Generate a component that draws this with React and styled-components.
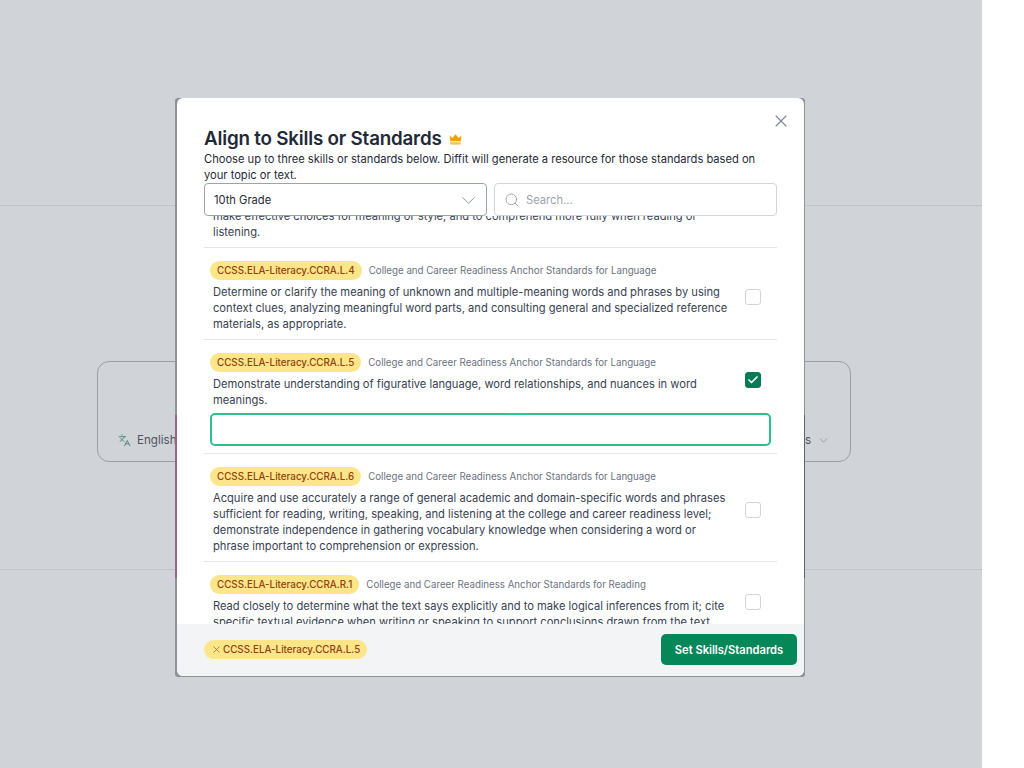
import React, { useLayoutEffect, useRef } from "react";
import styled, { createGlobalStyle } from "styled-components";
import { Languages, ChevronDown, Search, X, Check } from "lucide-react";

const GlobalStyle = createGlobalStyle`
  html, body { margin: 0; padding: 0; background: #fff; }
  body { font-family: Inter, "Liberation Sans", sans-serif; }
  * { box-sizing: border-box; }
`;

const standards = [
  {
    code: "CCSS.ELA-Literacy.CCRA.L.3",
    category: "College and Career Readiness Anchor Standards for Language",
    text: "Apply knowledge of language to understand how language functions in different contexts, to make effective choices for meaning or style, and to comprehend more fully when reading or listening.",
  },
  {
    code: "CCSS.ELA-Literacy.CCRA.L.4",
    category: "College and Career Readiness Anchor Standards for Language",
    text: "Determine or clarify the meaning of unknown and multiple-meaning words and phrases by using context clues, analyzing meaningful word parts, and consulting general and specialized reference materials, as appropriate.",
  },
  {
    code: "CCSS.ELA-Literacy.CCRA.L.5",
    category: "College and Career Readiness Anchor Standards for Language",
    text: "Demonstrate understanding of figurative language, word relationships, and nuances in word meanings.",
    checked: true,
  },
  {
    code: "CCSS.ELA-Literacy.CCRA.L.6",
    category: "College and Career Readiness Anchor Standards for Language",
    text: "Acquire and use accurately a range of general academic and domain-specific words and phrases sufficient for reading, writing, speaking, and listening at the college and career readiness level; demonstrate independence in gathering vocabulary knowledge when considering a word or phrase important to comprehension or expression.",
  },
  {
    code: "CCSS.ELA-Literacy.CCRA.R.1",
    category: "College and Career Readiness Anchor Standards for Reading",
    text: "Read closely to determine what the text says explicitly and to make logical inferences from it; cite specific textual evidence when writing or speaking to support conclusions drawn from the text.",
  },
];

const Page = styled.div`
  position: relative;
  width: 982px;
  height: 768px;
  overflow: hidden;
  background: #d0d3d8;
`;

const TopBand = styled.div`
  height: 206px;
  border-bottom: 1px solid #c0c3c9;
`;

const MiddleBand = styled.div`
  height: 364px;
  padding: 155px 0 0 97px;
  border-bottom: 1px solid #c0c3c9;
`;

const BackCard = styled.div`
  width: 754px;
  height: 101px;
  padding: 0 20px 11px;
  display: flex;
  align-items: flex-end;
  justify-content: space-between;
  border: 1px solid #9a9ea6;
  border-radius: 12px;
  font-size: 11.6px;
  line-height: 20px;
`;

const BackOption = styled.span`
  display: flex;
  align-items: center;
  gap: 6px;
  color: #4f545d;

  svg {
    color: ${(props) => props.$iconColor};
  }
`;

const Overlay = styled.div`
  position: absolute;
  inset: 0;
  display: flex;
  justify-content: center;
  padding: 98px 2px 0 0;
`;

const Plate = styled.div`
  width: 630px;
  height: 579px;
  padding: 0 1px 1px 2px;
  border-radius: 3px;
  background:
    linear-gradient(
        to bottom,
        #8e929b 0,
        #8e929b 317px,
        #96658f 317px,
        #96658f 480px,
        #8e929b 480px
      )
      left / 50% 100% no-repeat,
    linear-gradient(
        to bottom,
        #8e929b 0,
        #8e929b 317px,
        #5f6370 317px,
        #5f6370 480px,
        #8e929b 480px
      )
      right / 50% 100% no-repeat;
`;

const Modal = styled.section`
  position: relative;
  height: 578px;
  display: flex;
  flex-direction: column;
  overflow: hidden;
  border-radius: 6px;
  background: #fff;
  color: #1f2937;
`;

const CloseButton = styled.button`
  position: absolute;
  top: 13px;
  right: 13px;
  padding: 0;
  display: flex;
  border: 0;
  background: none;
  color: #7b8493;
`;

const Header = styled.header`
  padding: 29px 27px 0;
`;

const Title = styled.h2`
  margin: 0;
  display: flex;
  align-items: center;
  gap: 7px;
  font-size: 18.8px;
  line-height: 24px;
  font-weight: 600;
  letter-spacing: -0.2px;
  color: #1f2937;
`;

const Intro = styled.p`
  margin: 0;
  width: 565px;
  font-size: 11.15px;
  line-height: 16px;
  color: #1f2937;
`;

const Filters = styled.div`
  display: grid;
  grid-template-columns: 283px 1fr;
  gap: 7px;
`;

const GradeSelect = styled.div`
  height: 33px;
  padding: 1px 6px 0 9px;
  display: flex;
  align-items: center;
  justify-content: space-between;
  border: 1px solid #9ca3af;
  border-radius: 4px;
  font-size: 11.15px;
  color: #1f2937;

  svg {
    color: #8b929e;
  }
`;

const SearchBox = styled.label`
  height: 33px;
  padding: 1px 9px 0;
  display: flex;
  align-items: center;
  gap: 6px;
  border: 1px solid #d1d5db;
  border-radius: 4px;
  color: #8b929e;
`;

const SearchInput = styled.input`
  flex: 1;
  min-width: 0;
  padding: 0;
  border: 0;
  outline: 0;
  font: inherit;
  font-size: 11.15px;
  color: #1f2937;

  &::placeholder {
    color: #9ca3af;
    opacity: 1;
  }
`;

const List = styled.div`
  flex: 1;
  min-height: 0;
  margin: 0 27px;
  overflow-y: auto;
  scrollbar-width: none;
`;

const Item = styled.article`
  padding: 13px 0 6.2px;
  border-bottom: 1px solid #e5e7eb;
`;

const ItemRow = styled.div`
  display: flex;
  align-items: center;
  justify-content: space-between;
  padding: 0 16px 0 6px;
`;

const BadgeLine = styled.div`
  display: flex;
  align-items: center;
  gap: 7px;
  margin-bottom: 4px;
`;

const Badge = styled.span`
  height: 19px;
  padding: 0 7px;
  display: inline-flex;
  align-items: center;
  gap: 1px;
  border-radius: 10px;
  background: #fde68a;
  color: #92400e;
  font-size: 9.8px;
  font-weight: 500;
  white-space: nowrap;
`;

const Category = styled.span`
  font-size: 9.73px;
  color: #6b7280;
`;

const Description = styled.p`
  width: 520px;
  margin: 0;
  padding-left: 3px;
  font-size: 11.15px;
  line-height: 16.2px;
  color: #374151;
`;

const Checkbox = styled.span`
  flex: none;
  width: 16px;
  height: 16px;
  display: flex;
  align-items: center;
  justify-content: center;
  border: 1px solid ${(props) => (props.$checked ? "#057a55" : "#d1d5db")};
  border-radius: 3px;
  background: ${(props) => (props.$checked ? "#057a55" : "#fff")};
  color: #fff;
`;

const NoteWrap = styled.div`
  position: relative;
  margin: 5px 6px 0.4px;
`;

const NoteInput = styled.input`
  display: block;
  width: 100%;
  height: 33px;
  padding: 0 8px;
  border: 2px solid #2cc08b;
  border-radius: 5px;
  outline: 0;
  background: #fff;
`;

const NoteBlip = styled.span`
  position: absolute;
  top: 0;
  left: 298px;
  width: 20px;
  height: 2px;
  background: #1dd08f;
`;

const Footer = styled.footer`
  height: 52px;
  padding: 0 7px 1px 27px;
  display: flex;
  align-items: center;
  justify-content: space-between;
  background: #f3f4f6;
`;

const SubmitButton = styled.button`
  width: 136px;
  height: 31px;
  padding: 0;
  border: 0;
  border-radius: 5px;
  background: #05875a;
  color: #fff;
  font: inherit;
  font-size: 11.15px;
  font-weight: 600;
`;

const Crown = () => (
  <svg width="13" height="11" viewBox="0 0 13 11" fill="#f59e0b">
    <path d="M0.5 1.6 3.4 4 6.5 0.2 9.6 4 12.5 1.6 11.7 7.2H1.3Z" />
    <rect x="1.3" y="8.2" width="10.4" height="2.4" fill="#fbbf5a" />
  </svg>
);

const App = () => {
  const listRef = useRef(null);

  useLayoutEffect(() => {
    listRef.current.scrollTop = 60;
  }, []);

  return (
    <>
      <GlobalStyle />
      <Page>
        <TopBand />
        <MiddleBand>
          <BackCard>
            <BackOption $iconColor="#3f7d68">
              <Languages size={13} strokeWidth={1.5} />
              English
            </BackOption>
            <BackOption $iconColor="#8b929e">
              Settings
              <ChevronDown size={13} strokeWidth={1.5} />
            </BackOption>
          </BackCard>
        </MiddleBand>

        <Overlay>
          <Plate>
            <Modal>
              <CloseButton aria-label="Close">
                <X size={20} strokeWidth={1.3} />
              </CloseButton>
              <Header>
                <Title>
                  Align to Skills or Standards
                  <Crown />
                </Title>
                <Intro>
                  Choose up to three skills or standards below. Diffit will
                  generate a resource for those standards based on your topic or
                  text.
                </Intro>
                <Filters>
                  <GradeSelect>
                    10th Grade
                    <ChevronDown size={23} strokeWidth={1} />
                  </GradeSelect>
                  <SearchBox>
                    <Search size={16} strokeWidth={1.2} />
                    <SearchInput placeholder="Search..." />
                  </SearchBox>
                </Filters>
              </Header>

              <List ref={listRef}>
                {standards.map((item) => (
                  <Item key={item.code}>
                    <ItemRow>
                      <div>
                        <BadgeLine>
                          <Badge>{item.code}</Badge>
                          <Category>{item.category}</Category>
                        </BadgeLine>
                        <Description>{item.text}</Description>
                      </div>
                      <Checkbox $checked={item.checked}>
                        {item.checked && <Check size={12} strokeWidth={3.5} />}
                      </Checkbox>
                    </ItemRow>
                    {item.checked && (
                      <NoteWrap>
                        <NoteInput aria-label="Note" />
                        <NoteBlip />
                      </NoteWrap>
                    )}
                  </Item>
                ))}
              </List>

              <Footer>
                <Badge>
                  <X size={11} strokeWidth={1.3} />
                  CCSS.ELA-Literacy.CCRA.L.5
                </Badge>
                <SubmitButton>Set Skills/Standards</SubmitButton>
              </Footer>
            </Modal>
          </Plate>
        </Overlay>
      </Page>
    </>
  );
};

export default App;
